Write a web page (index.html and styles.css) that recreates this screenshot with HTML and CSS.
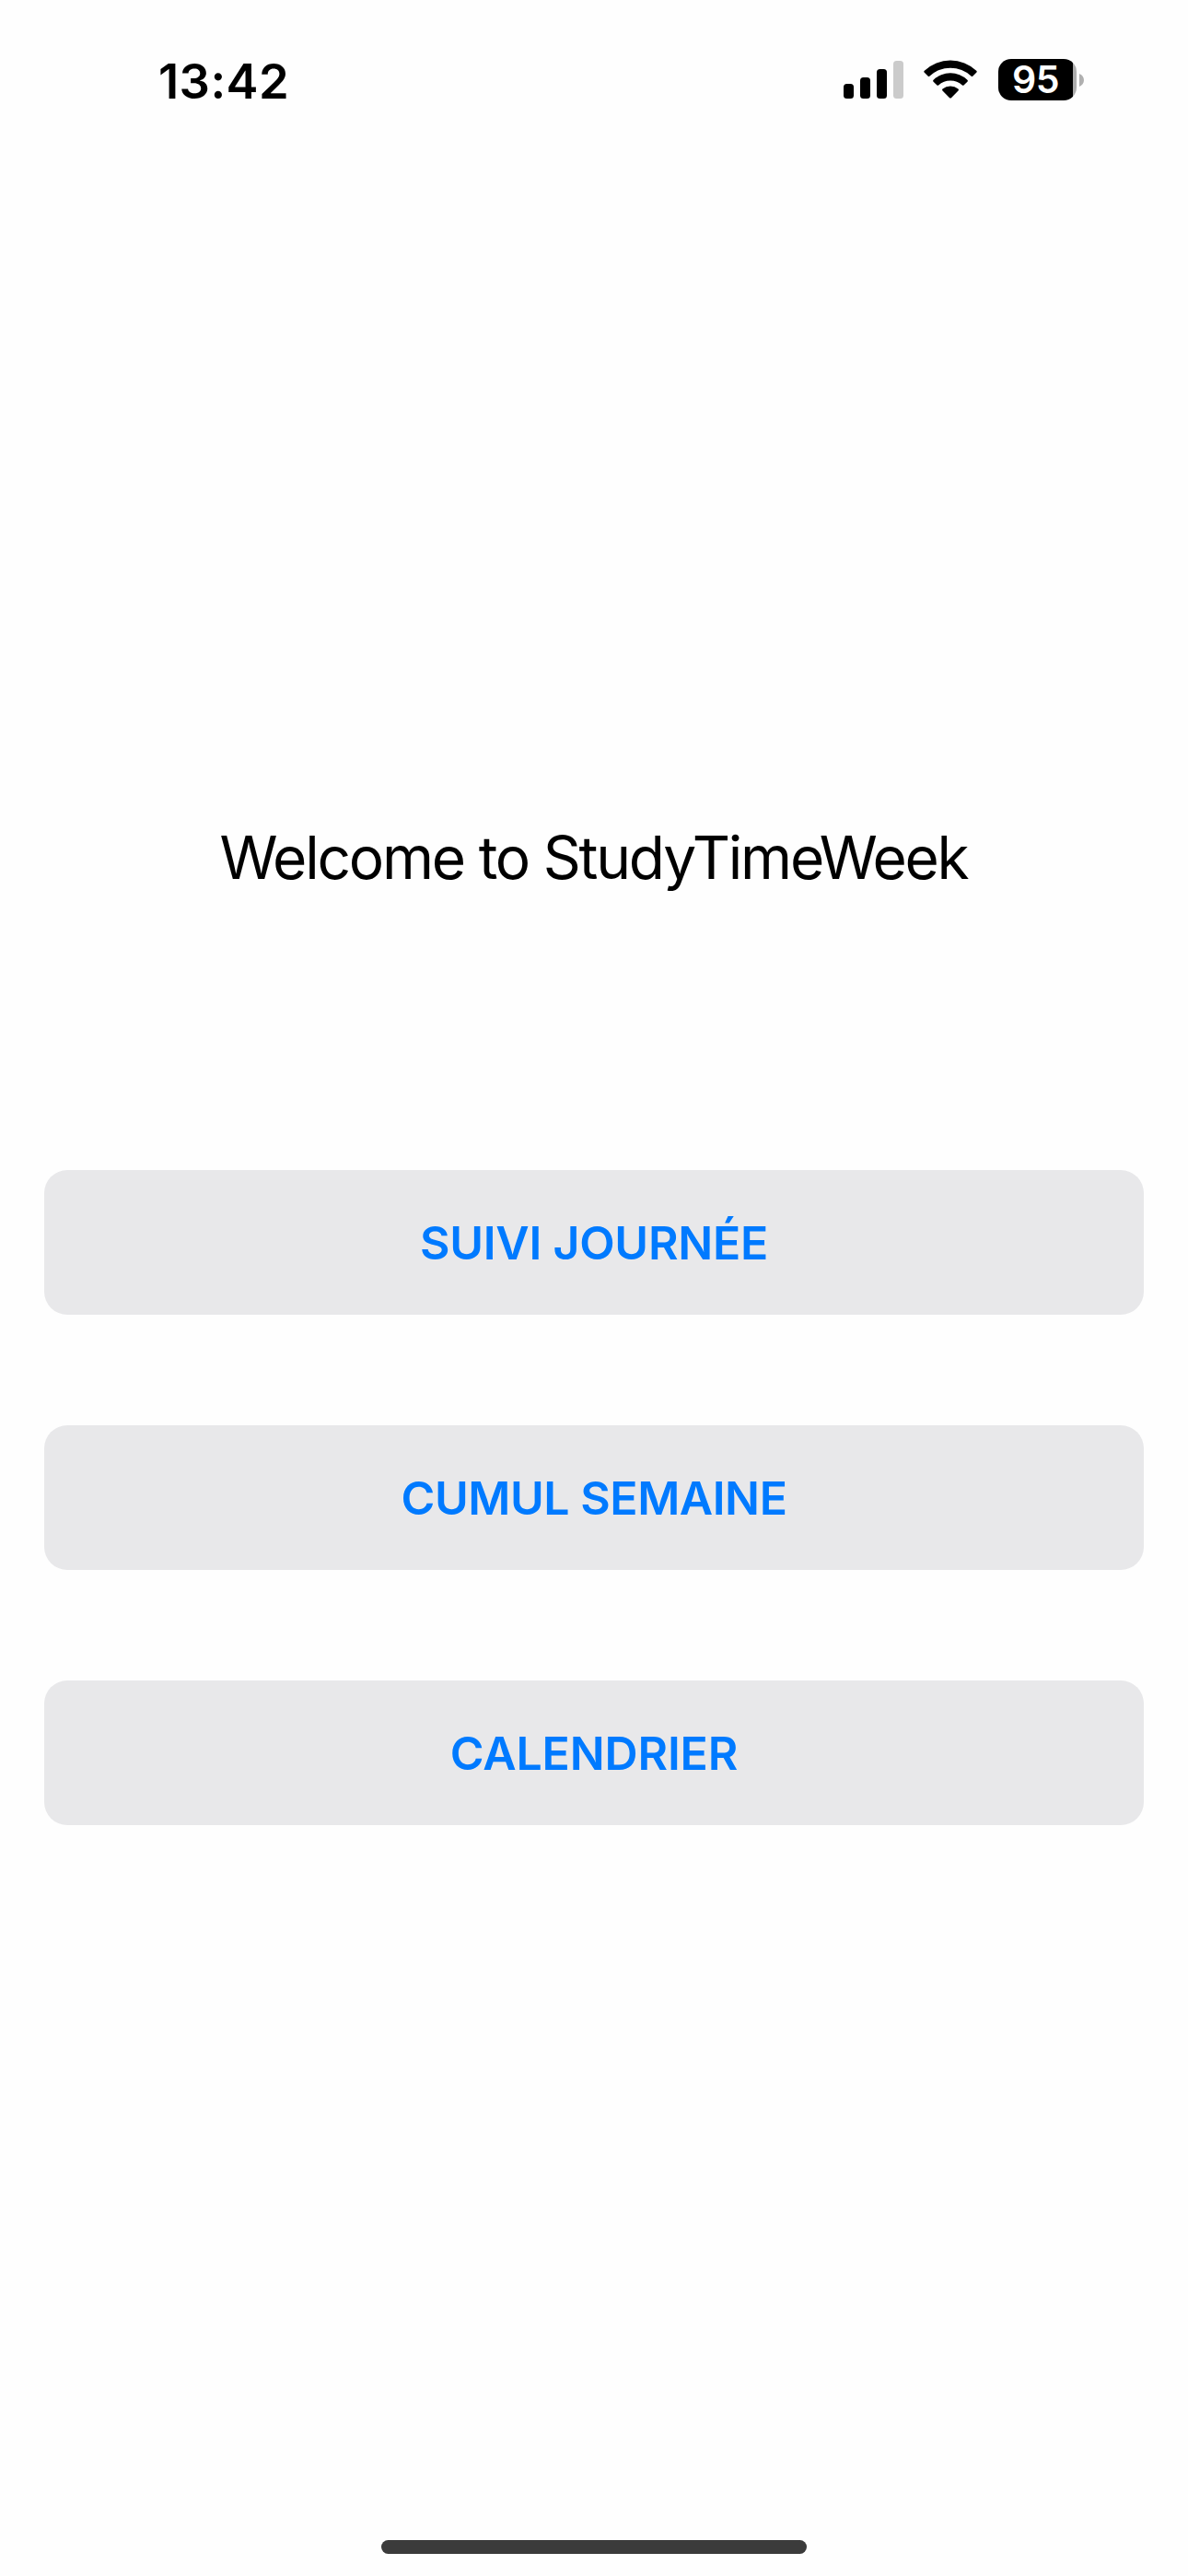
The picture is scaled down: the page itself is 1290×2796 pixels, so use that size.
FILE: index.html
```html
<!DOCTYPE html>
<html lang="fr">
<head>
<meta charset="utf-8">
<title>StudyTimeWeek</title>
<link rel="stylesheet" href="styles.css">
</head>
<body>
<div class="screen">
  <header class="status">
    <span class="time">13:42</span>
    <div class="indicators">
      <svg class="signal" width="65" height="41" viewBox="0 0 65 41">
        <rect x="0" y="25" width="11" height="16" rx="3.5"/>
        <rect x="18" y="18" width="11" height="23" rx="3.5"/>
        <rect x="36" y="9" width="11" height="32" rx="3.5"/>
        <rect x="54" y="0" width="11" height="41" rx="3.5" fill="#cbcbcb"/>
      </svg>
      <svg class="wifi" width="58" height="42" viewBox="0 0 58 42">
        <path d="M.8 13.8Q-.3 12.8.8 11.8A41 41 0 0 1 57.2 11.8Q58.3 12.8 57.2 13.8L53.2 17.7Q52.5 18.4 51.7 17.7A33.2 33.2 0 0 0 6.3 17.7Q5.5 18.4 4.8 17.7Z"/>
        <path d="M10.6 23.7Q9.6 22.7 10.6 21.7A26.5 26.5 0 0 1 47.4 21.7Q48.4 22.7 47.4 23.7L43.5 27.5Q42.7 28.2 41.9 27.5A19 19 0 0 0 16.1 27.5Q15.3 28.2 14.5 27.5Z"/>
        <path d="M20.5 33.6Q19.5 32.6 20.5 31.6A13.4 13.4 0 0 1 37.5 31.6Q38.5 32.6 37.5 33.6L29.9 41.2Q29 42 28.1 41.2Z"/>
      </svg>
      <div class="battery">
        <div class="cell"><span class="level">95</span></div>
        <svg class="tip" width="5" height="14" viewBox="0 0 5 14"><path d="M0 0C3 1.2 5 4 5 7S3 12.8 0 14Z"/></svg>
      </div>
    </div>
  </header>
  <main class="content">
    <h1 class="title">Welcome to StudyTimeWeek</h1>
    <nav class="menu">
      <button class="item journee">SUIVI JOURNÉE</button>
      <button class="item semaine">CUMUL SEMAINE</button>
      <button class="item calendrier">CALENDRIER</button>
    </nav>
  </main>
  <div class="home-bar"></div>
</div>
</body>
</html>
```

FILE: styles.css
```css
* { box-sizing: border-box; }
body { margin: 0; background: #fff; color: #000; font-family: Inter, "Liberation Sans", sans-serif; }
.screen { width: 1290px; height: 2796px; display: flex; flex-direction: column; align-items: center; padding-bottom: 24px; background: #fefefe; }
.home-bar { width: 462px; height: 15px; flex: none; border-radius: 8px; background: #3b3b3b; }
.status { width: 100%; height: 173px; display: flex; justify-content: space-between; align-items: center; padding: 0 113px 0 172px; }
.time { font-size: 52.5px; line-height: 64px; font-weight: 600; letter-spacing: 0.4px; margin-top: 3px; }
.indicators { display: flex; align-items: center; }
.wifi { margin-left: 22px; margin-top: -1px; }
.battery { display: flex; align-items: center; margin-left: 23px; }
.cell { width: 85px; height: 45px; border-radius: 14px; background: linear-gradient(90deg, #000 81px, #adadad 81px); display: flex; align-items: center; justify-content: center; padding-right: 4px; }
.level { color: #fff; font-size: 41px; line-height: 45px; font-weight: 600; letter-spacing: -0.4px; }
.tip { margin-left: 3px; fill: #b0b0b0; }
.content { width: 100%; flex: 1; padding: 718px 48px 0; }
.title { margin: 0; font-size: 64px; line-height: 80px; font-weight: 400; letter-spacing: -2.22px; text-indent: -1px; text-align: center; white-space: nowrap; }
.menu { display: flex; flex-direction: column; gap: 120px; margin-top: 299px; }
.item { height: 157px; padding: 0; border: 0; border-radius: 25px; background: #e8e8ea; color: #007aff; font-family: inherit; font-size: 50px; line-height: 60px; font-weight: 600; }
.journee { letter-spacing: -0.25px; }
.semaine { letter-spacing: -0.45px; }
.calendrier { letter-spacing: -0.15px; }
```
